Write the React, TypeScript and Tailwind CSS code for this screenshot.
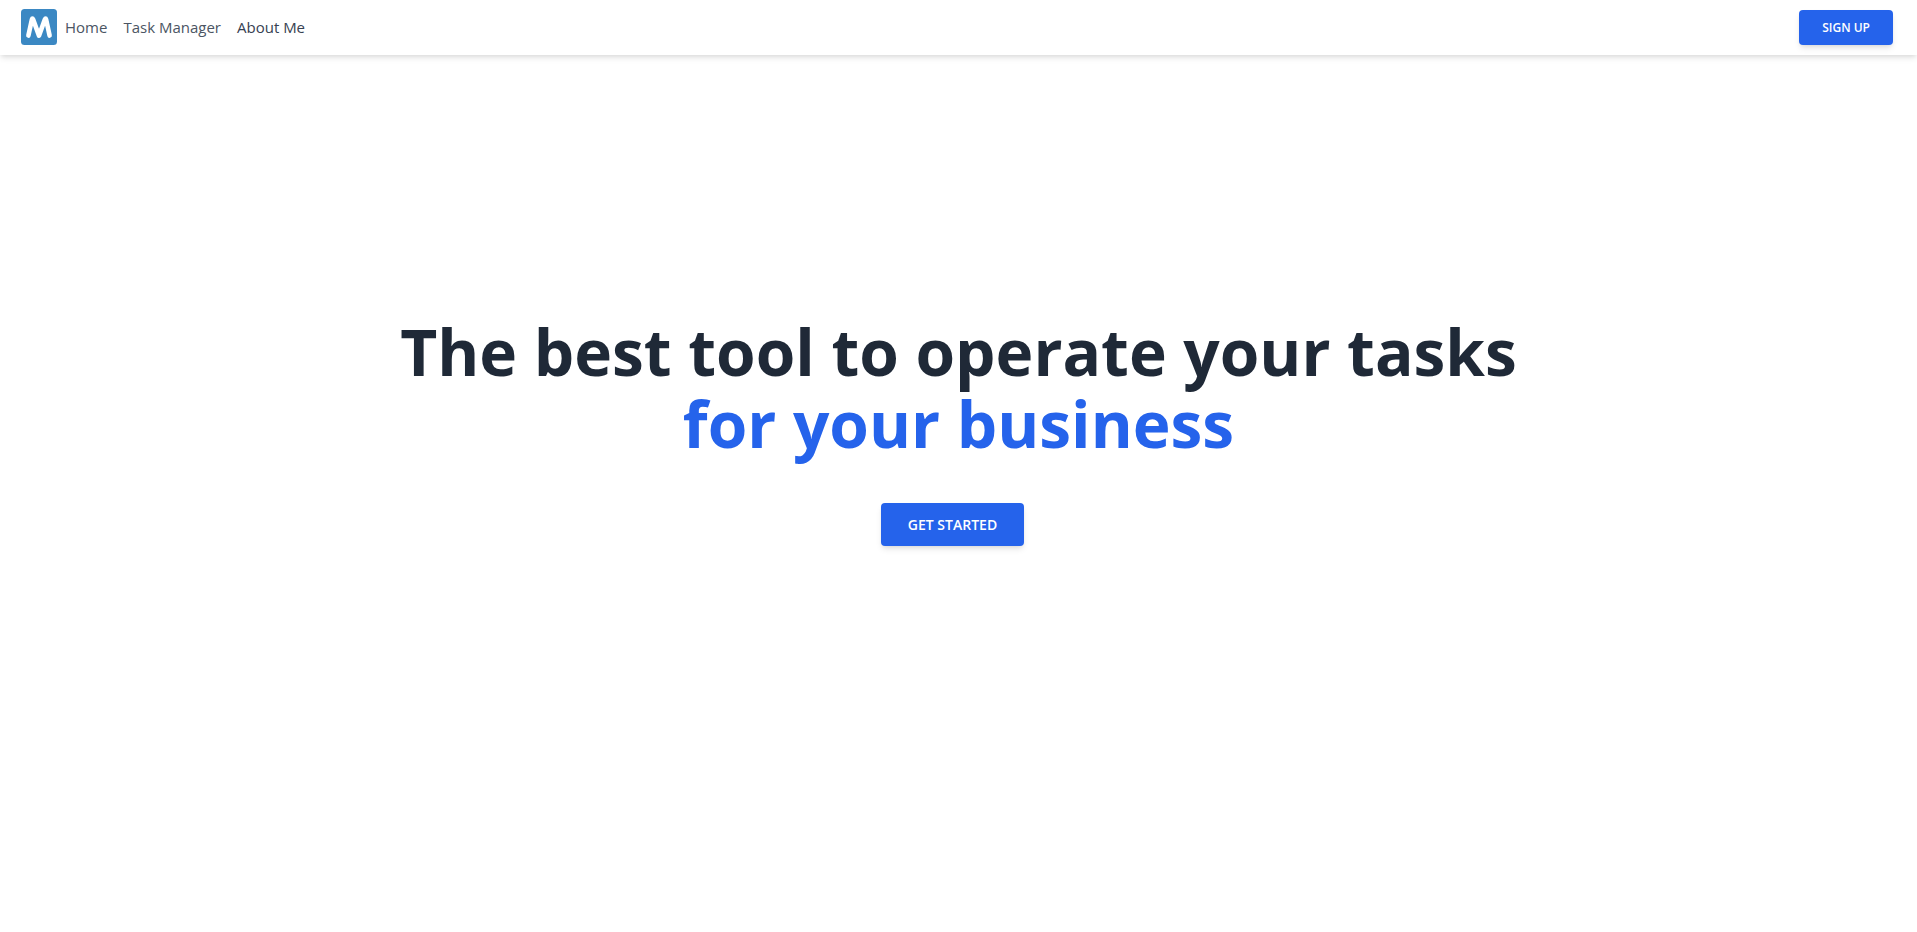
const links = [
  { label: "Home", color: "text-[#4b5563]" },
  { label: "Task Manager", color: "text-[#4b5563]" },
  { label: "About Me", color: "text-[#374151]" },
];

function Logo() {
  return (
    <svg viewBox="0 0 36 36" className="size-9" role="img" aria-label="Logo">
      <rect width="36" height="36" rx="3.5" fill="#3b88c3" />
      <path
        d="M7.4 26.6 L10.9 10.4 Q11.4 8.8 12.1 10.4 L18 26.6 L23.9 10.4 Q24.6 8.8 25.1 10.4 L28.6 26.6"
        fill="none"
        stroke="#fff"
        strokeWidth="4.6"
        strokeLinecap="round"
        strokeLinejoin="round"
      />
    </svg>
  );
}

function Header() {
  return (
    <header className="flex items-center justify-between bg-white pt-[9px] pr-6 pb-2.5 pl-[21px] shadow-[0_4px_6px_-1px_rgb(0_0_0/0.1),0_2px_4px_-1px_rgb(0_0_0/0.06)]">
      <nav className="flex items-center gap-2">
        <a href="#">
          <Logo />
        </a>
        <ul className="flex gap-4">
          {links.map((link) => (
            <li key={link.label}>
              <a href="#" className={`block text-[15px] leading-6 ${link.color}`}>
                {link.label}
              </a>
            </li>
          ))}
        </ul>
      </nav>
      <button
        type="button"
        className="rounded bg-[#2563eb] px-[23px] pt-2.5 pb-[9px] text-xs font-semibold text-white uppercase shadow-md"
      >
        Sign up
      </button>
    </header>
  );
}

export default function App() {
  return (
    <div className="min-h-screen bg-white font-['Open_Sans','Noto_Sans',sans-serif]">
      <Header />
      <main className="flex flex-col items-center px-6 pt-[261px] text-center">
        <h1 className="mb-[43px] text-[64px] leading-[72px] font-bold text-[#1f2937]">
          The best tool to operate your tasks
          <br />
          <span className="text-[#2563eb]">for your business</span>
        </h1>
        <button
          type="button"
          className="mr-3 h-[43px] rounded bg-[#2563eb] px-[27px] text-sm font-semibold text-white uppercase shadow-md"
        >
          Get started
        </button>
      </main>
    </div>
  );
}
